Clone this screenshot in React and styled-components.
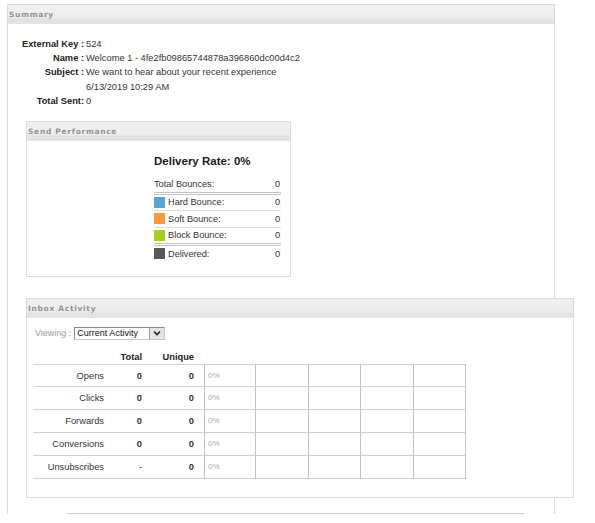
import styled, { createGlobalStyle } from "styled-components";

const GlobalStyle = createGlobalStyle`
  body {
    margin: 0;
    background: #fff;
    font-family: "Liberation Sans", Arial, sans-serif;
    color: #222;
  }
`;

const Page = styled.div`
  padding: 4px 0 0 7px;
`;

const Panel = styled.section`
  width: ${(p) => p.$w}px;
  box-sizing: border-box;
  border: 1px solid #dcdcdc;
  border-bottom: ${(p) => (p.$open ? "none" : "1px solid #dcdcdc")};
  background: #fff;
  margin-top: ${(p) => p.$mt || 0}px;
`;

const PanelHeader = styled.div`
  height: 19px;
  line-height: 19px;
  padding-left: 1px;
  font-family: "DejaVu Sans", Verdana, sans-serif;
  font-weight: bold;
  font-size: 7.5px;
  letter-spacing: 0.7px;
  color: #949494;
  background: linear-gradient(#f1f1f1 0%, #ebebeb 70%, #e2e2e2 72%, #e4e4e4 100%);
`;

const SummaryBody = styled.div`
  padding: 0 0 0 18px;
`;

const Fields = styled.dl`
  display: grid;
  grid-template-columns: 62px auto;
  column-gap: 2px;
  margin: 13px 0 0 -4px;
  font-size: 9.3px;
  line-height: 14.2px;
`;

const Label = styled.dt`
  font-weight: bold;
  text-align: right;
  color: #222;
  white-space: nowrap;
`;

const Value = styled.dd`
  margin: 0;
  color: #333;
  white-space: nowrap;
`;

const PerfBody = styled.div`
  padding: 13px 9px 14px 127px;
`;

const Rate = styled.div`
  font-weight: bold;
  font-size: 11.5px;
  line-height: 14px;
  margin-bottom: 8px;
  color: #1a1a1a;
`;

const StatRow = styled.div`
  display: flex;
  align-items: center;
  height: 15.5px;
  font-size: 9.2px;
  color: #333;
  border-bottom: ${(p) =>
    p.$sep === "double"
      ? "3px double #c2c2c2"
      : p.$sep === "single"
      ? "1px solid #dedede"
      : "none"};
`;

const Swatch = styled.span`
  width: 11px;
  height: 11px;
  margin-right: 3px;
  background: ${(p) => p.$c};
`;

const StatValue = styled.span`
  margin-left: auto;
  padding-right: 1px;
`;

const InboxBody = styled.div`
  padding: 9px 0 18px 8px;
`;

const ViewRow = styled.div`
  display: flex;
  align-items: center;
  font-size: 9px;
  color: #9c9c9c;
`;

const Select = styled.div`
  margin-left: 3px;
  width: 91px;
  height: 13px;
  box-sizing: border-box;
  display: flex;
  border: 1px solid #8a8a8a;
  border-right-color: #c8c8c8;
  border-bottom-color: #c8c8c8;
  background: #fff;
  color: #111;
  font-size: 9px;
  line-height: 11px;
`;

const SelectText = styled.span`
  flex: 1;
  padding-left: 2px;
  white-space: nowrap;
`;

const Arrow = styled.span`
  width: 14px;
  display: flex;
  align-items: center;
  justify-content: center;
  border-left: 1px solid #a0a0a0;
  background: #e4e4e4;
`;

const Table = styled.div`
  display: grid;
  grid-template-columns: 77px 35px 59px repeat(5, 52.4px);
  margin: 11px 0 0 -2px;
  font-size: 9.3px;
`;

const HeadCell = styled.div`
  height: 13px;
  line-height: 13px;
  text-align: right;
  padding-right: ${(p) => p.$pr || 0}px;
  font-weight: bold;
  color: #222;
`;

const Cell = styled.div`
  height: 23px;
  box-sizing: border-box;
  line-height: 22px;
  border-bottom: 1px solid #d4d4d4;
  border-top: ${(p) => (p.$first ? "1px solid #d4d4d4" : "none")};
  text-align: right;
  padding-right: ${(p) => p.$pr || 0}px;
  font-weight: ${(p) => (p.$bold ? "bold" : "normal")};
  color: #333;
`;

const BarCell = styled.div`
  height: 23px;
  box-sizing: border-box;
  line-height: 22px;
  border-bottom: 1px solid #d0d0d0;
  border-top: ${(p) => (p.$first ? "1px solid #d0d0d0" : "none")};
  border-right: 1px solid #c2c2c2;
  border-left: ${(p) => (p.$edge ? "1px solid #c2c2c2" : "none")};
  padding-left: 3px;
  font-size: 8px;
  color: #aaa;
`;

const Rule = styled.hr`
  margin: 15px 0 0 41px;
  width: 457px;
  height: 0;
  border: none;
  border-top: 1px solid #cfcfcf;
`;

const stats = [
  { label: "Total Bounces:", value: 0, sep: "double" },
  { label: "Hard Bounce:", value: 0, color: "#5ba3d0", sep: "single" },
  { label: "Soft Bounce:", value: 0, color: "#f39c3b", sep: "single" },
  { label: "Block Bounce:", value: 0, color: "#a5d01c", sep: "double" },
  { label: "Delivered:", value: 0, color: "#55595c" },
];

const activity = [
  { label: "Opens", total: "0", unique: "0" },
  { label: "Clicks", total: "0", unique: "0" },
  { label: "Forwards", total: "0", unique: "0" },
  { label: "Conversions", total: "0", unique: "0" },
  { label: "Unsubscribes", total: "-", unique: "0" },
];

const App = () => {
  return (
    <Page>
      <GlobalStyle />
      <Panel $w={548} $open>
        <PanelHeader>Summary</PanelHeader>
        <SummaryBody>
          <Fields>
            <Label>External Key :</Label>
            <Value>524</Value>
            <Label>Name :</Label>
            <Value>Welcome 1 - 4fe2fb09865744878a396860dc00d4c2</Value>
            <Label>Subject :</Label>
            <Value>We want to hear about your recent experience</Value>
            <Label />
            <Value>6/13/2019 10:29 AM</Value>
            <Label>Total Sent:</Label>
            <Value>0</Value>
          </Fields>

          <Panel $w={265} $mt={13}>
            <PanelHeader>Send Performance</PanelHeader>
            <PerfBody>
              <Rate>Delivery Rate: 0%</Rate>
              {stats.map((s) => (
                <StatRow key={s.label} $sep={s.sep}>
                  {s.color && <Swatch $c={s.color} />}
                  {s.label}
                  <StatValue>{s.value}</StatValue>
                </StatRow>
              ))}
            </PerfBody>
          </Panel>

          <Panel $w={548} $mt={21}>
            <PanelHeader>Inbox Activity</PanelHeader>
            <InboxBody>
              <ViewRow>
                Viewing :
                <Select>
                  <SelectText>Current Activity</SelectText>
                  <Arrow>
                    <svg width="8" height="6" viewBox="0 0 8 6">
                      <polyline points="1,1.5 4,4.5 7,1.5" fill="none" stroke="#222" strokeWidth="1.6" />
                    </svg>
                  </Arrow>
                </Select>
              </ViewRow>
              <Table>
                <HeadCell />
                <HeadCell $pr={3}>Total</HeadCell>
                <HeadCell $pr={10}>Unique</HeadCell>
                <HeadCell />
                <HeadCell />
                <HeadCell />
                <HeadCell />
                <HeadCell />
                {activity.map((r, i) => [
                  <Cell key={r.label + "l"} $first={i === 0} $pr={6}>{r.label}</Cell>,
                  <Cell key={r.label + "t"} $first={i === 0} $pr={3} $bold={r.total !== "-"}>{r.total}</Cell>,
                  <Cell key={r.label + "u"} $first={i === 0} $pr={10} $bold>{r.unique}</Cell>,
                  ...[0, 1, 2, 3, 4].map((c) => (
                    <BarCell key={r.label + c} $first={i === 0} $edge={c === 0}>
                      {c === 0 ? "0%" : ""}
                    </BarCell>
                  )),
                ])}
              </Table>
            </InboxBody>
          </Panel>
          <Rule />
        </SummaryBody>
      </Panel>
    </Page>
  );
};

export default App;
